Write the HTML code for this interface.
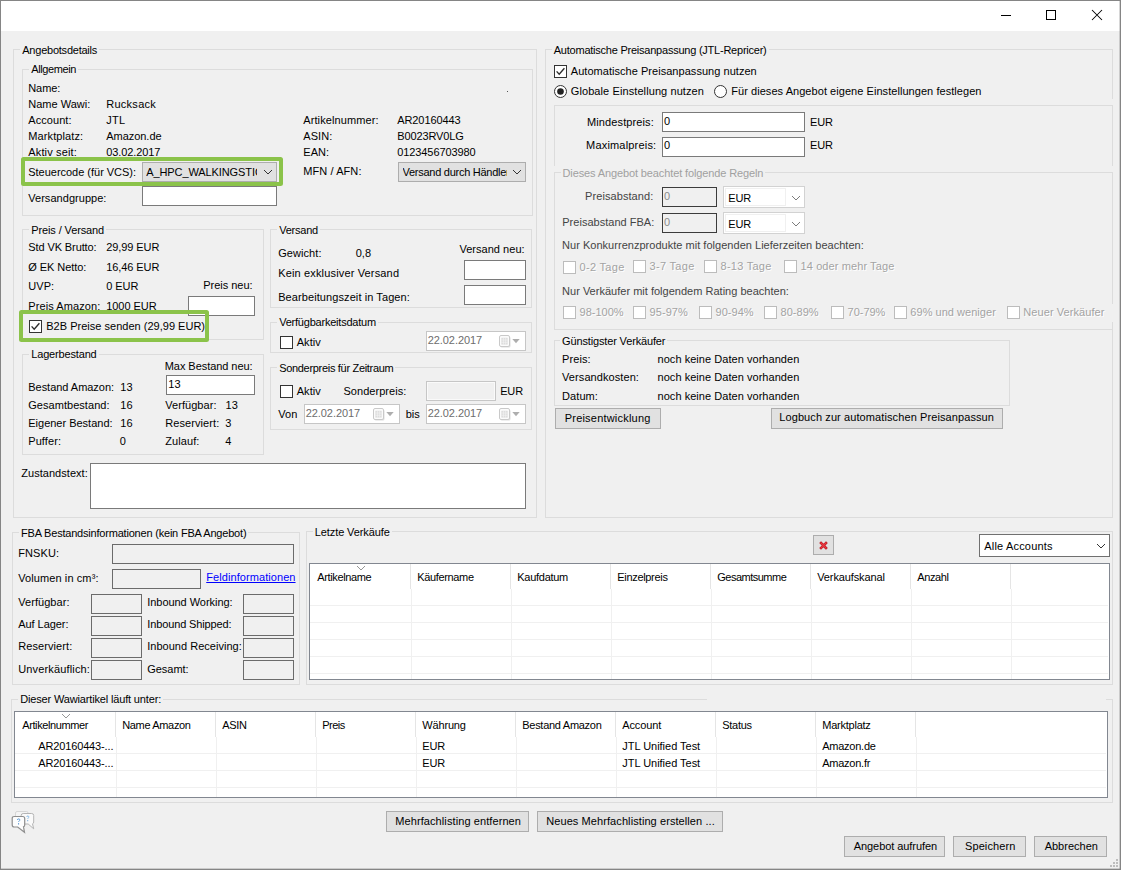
<!DOCTYPE html>
<html lang="de"><head><meta charset="utf-8"><title>Angebot</title>
<style>
*{box-sizing:border-box;margin:0;padding:0}
html,body{width:1121px;height:870px;overflow:hidden;background:#f0f0f0}
body{position:relative;font-family:"Liberation Sans", sans-serif;font-size:11px;line-height:13px;color:#000}
.b{position:absolute;display:block}
.t{position:absolute;white-space:pre;height:13px;line-height:13px}
.dis{color:#a3a3a3;text-shadow:1px 1px 0 #fff}
.lnk{text-decoration:underline}
</style></head>
<body>
<div class="b" style="left:0px;top:0px;width:1121px;height:870px;background:#f0f0f0;"></div>
<div class="b" style="left:0px;top:0px;width:1121px;height:31px;background:#fff;"></div>
<div class="b" style="left:1001px;top:15px;width:10px;height:1px;background:#000;"></div>
<div class="b" style="left:1046px;top:10px;width:10px;height:10px;border:1px solid #000;"></div>
<svg class="b" style="left:1091px;top:9px" width="12" height="12" viewBox="0 0 12 12"><path d="M1 1 L11 11 M11 1 L1 11" stroke="#000" stroke-width="1.05" fill="none"/></svg>
<div class="b" style="left:13px;top:49px;width:524px;height:469px;border:1px solid #dcdcdc;"></div>
<span class="t" style="top:44px;left:22.25px;letter-spacing:-0.232px;background:#f0f0f0;padding:0 2px;margin-left:-2px;">Angebotsdetails</span>
<div class="b" style="left:22px;top:69px;width:511px;height:147px;border:1px solid #dcdcdc;"></div>
<span class="t" style="top:63px;left:31.25px;letter-spacing:-0.39px;background:#f0f0f0;padding:0 2px;margin-left:-2px;">Allgemein</span>
<span class="t" style="top:82px;left:28.25px;letter-spacing:-0.081px;">Name:</span>
<span class="t" style="top:98px;left:28.25px;letter-spacing:0.006px;">Name Wawi:</span>
<span class="t" style="top:98px;left:106.25px;letter-spacing:0.264px;">Rucksack</span>
<span class="t" style="top:114px;left:28.25px;letter-spacing:0.061px;">Account:</span>
<span class="t" style="top:114px;left:106.25px;letter-spacing:0.219px;">JTL</span>
<span class="t" style="top:130px;left:28.25px;letter-spacing:0.109px;">Marktplatz:</span>
<span class="t" style="top:130px;left:106.25px;letter-spacing:-0.04px;">Amazon.de</span>
<span class="t" style="top:146px;left:28.25px;letter-spacing:0.157px;">Aktiv seit:</span>
<span class="t" style="top:146px;left:106.25px;letter-spacing:-0.106px;">03.02.2017</span>
<span class="t" style="top:166px;left:28.25px;letter-spacing:-0.02px;">Steuercode (für VCS):</span>
<span class="t" style="top:192px;left:28.25px;letter-spacing:0.038px;">Versandgruppe:</span>
<span class="t" style="top:114px;left:303.25px;letter-spacing:0.095px;">Artikelnummer:</span>
<span class="t" style="top:114px;left:397.25px;letter-spacing:-0.093px;">AR20160443</span>
<span class="t" style="top:130px;left:303.25px;letter-spacing:0.08px;">ASIN:</span>
<span class="t" style="top:130px;left:397.25px;letter-spacing:-0.114px;">B0023RV0LG</span>
<span class="t" style="top:146px;left:303.25px;letter-spacing:0.08px;">EAN:</span>
<span class="t" style="top:146px;left:397.25px;letter-spacing:-0.095px;">0123456703980</span>
<span class="t" style="top:165px;left:303.25px;letter-spacing:0.085px;">MFN / AFN:</span>
<div class="b" style="left:507px;top:91px;width:1px;height:1px;background:#555;"></div>
<div class="b" style="left:142px;top:162px;width:135px;height:20px;background:#e1e1e1;border:1px solid #adadad;"></div>
<span class="t" style="top:166px;left:146.25px;letter-spacing:-0.1px;width:110.5px;overflow:hidden;">A_HPC_WALKINGSTICK</span>
<svg class="b" style="left:263px;top:168.6px" width="10" height="6" viewBox="-1 -1 10 6"><path d="M0 0 L4.0 4 L8 0" fill="none" stroke="#333" stroke-width="1"/></svg>
<div class="b" style="left:398px;top:162px;width:128px;height:20px;background:#e1e1e1;border:1px solid #adadad;"></div>
<span class="t" style="top:166px;left:402.55px;letter-spacing:-0.27px;width:104px;overflow:hidden;">Versand durch Händler</span>
<svg class="b" style="left:512px;top:168.6px" width="10" height="6" viewBox="-1 -1 10 6"><path d="M0 0 L4.0 4 L8 0" fill="none" stroke="#333" stroke-width="1"/></svg>
<div class="b" style="left:142px;top:186px;width:135px;height:20px;background:#fff;border:1px solid #7a7a7a;"></div>
<div class="b" style="left:22px;top:229px;width:242px;height:111px;border:1px solid #dcdcdc;"></div>
<span class="t" style="top:224px;left:31.25px;letter-spacing:-0.12px;background:#f0f0f0;padding:0 2px;margin-left:-2px;">Preis / Versand</span>
<span class="t" style="top:241px;left:28.25px;letter-spacing:-0.1px;">Std VK Brutto:</span>
<span class="t" style="top:241px;left:106.25px;letter-spacing:-0.085px;">29,99 EUR</span>
<span class="t" style="top:261px;left:28.25px;letter-spacing:-0.059px;">Ø EK Netto:</span>
<span class="t" style="top:261px;left:106.25px;letter-spacing:-0.085px;">16,46 EUR</span>
<span class="t" style="top:280px;left:28.25px;letter-spacing:0.08px;">UVP:</span>
<span class="t" style="top:280px;left:106.25px;letter-spacing:-0.061px;">0 EUR</span>
<span class="t" style="top:300px;left:28.25px;letter-spacing:0.087px;">Preis Amazon:</span>
<span class="t" style="top:300px;left:106.25px;letter-spacing:-0.058px;">1000 EUR</span>
<span class="t" style="top:279px;left:203.25px;letter-spacing:-0.023px;">Preis neu:</span>
<div class="b" style="left:20px;top:310px;width:188px;height:31px;background:#f0f0f0;"></div>
<div class="b" style="left:188px;top:296px;width:67px;height:20px;background:#fff;border:1px solid #7a7a7a;"></div>
<div class="b" style="left:29px;top:320px;width:13px;height:13px;background:#fff;border:1px solid #333;"></div>
<svg class="b" style="left:29px;top:320px" width="13" height="13" viewBox="0 0 13 13"><path d="M2.6 6.4 L5.2 9.2 L10.4 3.2" fill="none" stroke="#2b2b2b" stroke-width="1.350"/></svg>
<span class="t" style="top:320px;left:46.25px;letter-spacing:0.015px;">B2B Preise senden (29,99 EUR)</span>
<div class="b" style="left:22px;top:354px;width:242px;height:101px;border:1px solid #dcdcdc;"></div>
<span class="t" style="top:348px;left:31.25px;letter-spacing:-0.165px;background:#f0f0f0;padding:0 2px;margin-left:-2px;">Lagerbestand</span>
<span class="t" style="top:360px;left:164.75px;letter-spacing:-0.054px;">Max Bestand neu:</span>
<div class="b" style="left:166px;top:375px;width:89px;height:20px;background:#fff;border:1px solid #7a7a7a;"></div>
<span class="t" style="top:378px;left:168.25px;letter-spacing:0.08px;">13</span>
<span class="t" style="top:381px;left:28.25px;letter-spacing:-0.029px;">Bestand Amazon:</span>
<span class="t" style="top:381px;left:120.25px;letter-spacing:0.08px;">13</span>
<span class="t" style="top:399px;left:28.25px;letter-spacing:0.042px;">Gesamtbestand:</span>
<span class="t" style="top:399px;left:120.25px;letter-spacing:0.08px;">16</span>
<span class="t" style="top:417px;left:28.25px;letter-spacing:-0.006px;">Eigener Bestand:</span>
<span class="t" style="top:417px;left:120.25px;letter-spacing:0.08px;">16</span>
<span class="t" style="top:435px;left:28.25px;letter-spacing:0.08px;">Puffer:</span>
<span class="t" style="top:435px;left:119.75px;letter-spacing:0.08px;">0</span>
<span class="t" style="top:399px;left:165.25px;letter-spacing:0.053px;">Verfügbar:</span>
<span class="t" style="top:399px;left:225.5px;letter-spacing:0.08px;">13</span>
<span class="t" style="top:417px;left:165.25px;letter-spacing:0.08px;">Reserviert:</span>
<span class="t" style="top:417px;left:225.25px;letter-spacing:0.08px;">3</span>
<span class="t" style="top:435px;left:165.25px;letter-spacing:0.08px;">Zulauf:</span>
<span class="t" style="top:435px;left:225.25px;letter-spacing:0.08px;">4</span>
<span class="t" style="top:467px;left:21.25px;letter-spacing:0.039px;">Zustandstext:</span>
<div class="b" style="left:90px;top:463px;width:436px;height:46px;background:#fff;border:1px solid #7a7a7a;"></div>
<div class="b" style="left:270px;top:229px;width:262px;height:79px;border:1px solid #dcdcdc;"></div>
<span class="t" style="top:224px;left:279.15px;letter-spacing:-0.225px;background:#f0f0f0;padding:0 2px;margin-left:-2px;">Versand</span>
<span class="t" style="top:247px;left:278.15px;letter-spacing:0.08px;">Gewicht:</span>
<span class="t" style="top:247px;left:355.65px;letter-spacing:0.08px;">0,8</span>
<span class="t" style="top:243px;left:459.4px;letter-spacing:0.038px;">Versand neu:</span>
<span class="t" style="top:267px;left:278.15px;letter-spacing:0.158px;">Kein exklusiver Versand</span>
<div class="b" style="left:464px;top:260px;width:62px;height:20px;background:#fff;border:1px solid #7a7a7a;"></div>
<span class="t" style="top:291px;left:278.15px;letter-spacing:0.09px;">Bearbeitungszeit in Tagen:</span>
<div class="b" style="left:464px;top:285px;width:62px;height:20px;background:#fff;border:1px solid #7a7a7a;"></div>
<div class="b" style="left:270px;top:322px;width:262px;height:31px;border:1px solid #dcdcdc;"></div>
<span class="t" style="top:316px;left:279.15px;letter-spacing:-0.215px;background:#f0f0f0;padding:0 2px;margin-left:-2px;">Verfügbarkeitsdatum</span>
<div class="b" style="left:280px;top:336px;width:13px;height:13px;background:#fff;border:1px solid #333;"></div>
<span class="t" style="top:336px;left:296.65px;letter-spacing:0.08px;">Aktiv</span>
<div class="b" style="left:426px;top:331px;width:100px;height:20px;background:#fff;border:1px solid #c6c6c6;"></div>
<span class="t" style="top:334px;left:427.65px;letter-spacing:-0.056px;color:#6d6d6d;">22.02.2017</span>
<svg class="b" style="left:499px;top:335px" width="12" height="13" viewBox="0 0 12 13">
<rect x="1.5" y="1.5" width="10" height="11" rx="1.5" fill="#dedede" stroke="none"/>
<rect x="0.5" y="0.5" width="10" height="11" rx="1.5" fill="#fbfbfb" stroke="#c9c9c9"/>
<rect x="2.3" y="2.800" width="6.400" height="6.800" fill="#dddddd"/>
<path d="M4.500 2.800v6.800M6.600 2.800v6.800M2.300 5h6.400M2.300 7.300h6.400" stroke="#f4f4f4" stroke-width="0.6"/></svg>
<svg class="b" style="left:512px;top:339px" width="8" height="5" viewBox="0 0 8 5"><path d="M0.3 0 H7.7 L4 4.3 Z" fill="#aeaeae"/></svg>
<div class="b" style="left:270px;top:367px;width:262px;height:63px;border:1px solid #dcdcdc;"></div>
<span class="t" style="top:362px;left:279.15px;letter-spacing:-0.307px;background:#f0f0f0;padding:0 2px;margin-left:-2px;">Sonderpreis für Zeitraum</span>
<div class="b" style="left:280px;top:385px;width:13px;height:13px;background:#fff;border:1px solid #333;"></div>
<span class="t" style="top:385px;left:296.65px;letter-spacing:0.08px;">Aktiv</span>
<span class="t" style="top:385px;left:343.4px;letter-spacing:0.056px;">Sonderpreis:</span>
<div class="b" style="left:426px;top:381px;width:70px;height:20px;background:#f0f0f0;border:1px solid #c6c6c6;box-shadow:inset 0 0 0 1px #fafafa;"></div>
<span class="t" style="top:385px;left:500.15px;letter-spacing:-0.145px;">EUR</span>
<span class="t" style="top:408px;left:278.15px;letter-spacing:0.08px;">Von</span>
<div class="b" style="left:304px;top:404px;width:96px;height:20px;background:#fff;border:1px solid #c6c6c6;"></div>
<span class="t" style="top:407px;left:305.65px;letter-spacing:-0.056px;color:#6d6d6d;">22.02.2017</span>
<svg class="b" style="left:373px;top:408px" width="12" height="13" viewBox="0 0 12 13">
<rect x="1.5" y="1.5" width="10" height="11" rx="1.5" fill="#dedede" stroke="none"/>
<rect x="0.5" y="0.5" width="10" height="11" rx="1.5" fill="#fbfbfb" stroke="#c9c9c9"/>
<rect x="2.3" y="2.800" width="6.400" height="6.800" fill="#dddddd"/>
<path d="M4.500 2.800v6.800M6.600 2.800v6.800M2.300 5h6.400M2.300 7.300h6.400" stroke="#f4f4f4" stroke-width="0.6"/></svg>
<svg class="b" style="left:386px;top:412px" width="8" height="5" viewBox="0 0 8 5"><path d="M0.3 0 H7.7 L4 4.3 Z" fill="#aeaeae"/></svg>
<span class="t" style="top:408px;left:405.65px;letter-spacing:0.08px;">bis</span>
<div class="b" style="left:426px;top:404px;width:100px;height:20px;background:#fff;border:1px solid #c6c6c6;"></div>
<span class="t" style="top:407px;left:427.65px;letter-spacing:-0.056px;color:#6d6d6d;">22.02.2017</span>
<svg class="b" style="left:499px;top:408px" width="12" height="13" viewBox="0 0 12 13">
<rect x="1.5" y="1.5" width="10" height="11" rx="1.5" fill="#dedede" stroke="none"/>
<rect x="0.5" y="0.5" width="10" height="11" rx="1.5" fill="#fbfbfb" stroke="#c9c9c9"/>
<rect x="2.3" y="2.800" width="6.400" height="6.800" fill="#dddddd"/>
<path d="M4.500 2.800v6.800M6.600 2.800v6.800M2.300 5h6.400M2.300 7.300h6.400" stroke="#f4f4f4" stroke-width="0.6"/></svg>
<svg class="b" style="left:512px;top:412px" width="8" height="5" viewBox="0 0 8 5"><path d="M0.3 0 H7.7 L4 4.3 Z" fill="#aeaeae"/></svg>
<div class="b" style="left:21px;top:157px;width:262px;height:29px;border:4px solid #8bc34a;z-index:5;border-radius:2.500px;"></div>
<div class="b" style="left:19px;top:310px;width:190px;height:32px;border:4px solid #8bc34a;z-index:5;border-radius:2.500px;"></div>
<div class="b" style="left:545px;top:49px;width:568px;height:469px;border:1px solid #dcdcdc;"></div>
<span class="t" style="top:44px;left:553.75px;letter-spacing:-0.232px;background:#f0f0f0;padding:0 2px;margin-left:-2px;">Automatische Preisanpassung (JTL-Repricer)</span>
<div class="b" style="left:1110px;top:99px;width:4px;height:6px;background:#f0f0f0;"></div>
<div class="b" style="left:1110px;top:166px;width:4px;height:6px;background:#f0f0f0;"></div>
<div class="b" style="left:554px;top:65px;width:13px;height:13px;background:#fff;border:1px solid #333;"></div>
<svg class="b" style="left:554px;top:65px" width="13" height="13" viewBox="0 0 13 13"><path d="M2.6 6.4 L5.2 9.2 L10.4 3.2" fill="none" stroke="#2b2b2b" stroke-width="1.350"/></svg>
<span class="t" style="top:65px;left:570.75px;letter-spacing:0.039px;">Automatische Preisanpassung nutzen</span>
<svg class="b" style="left:554px;top:84.6px" width="13" height="13" viewBox="0 0 13 13"><circle cx="6.5" cy="6.5" r="6" fill="#fff" stroke="#333" stroke-width="1"/><circle cx="6.5" cy="6.5" r="3.3" fill="#222"/></svg>
<span class="t" style="top:85px;left:570.75px;letter-spacing:0.093px;">Globale Einstellung nutzen</span>
<svg class="b" style="left:714.3px;top:84.6px" width="13" height="13" viewBox="0 0 13 13"><circle cx="6.5" cy="6.5" r="6" fill="#fff" stroke="#333" stroke-width="1"/></svg>
<span class="t" style="top:85px;left:731.25px;letter-spacing:0.053px;">Für dieses Angebot eigene Einstellungen festlegen</span>
<div class="b" style="left:554px;top:105px;width:559px;height:1px;background:#dcdcdc;"></div>
<div class="b" style="left:554px;top:105px;width:1px;height:61px;background:#dcdcdc;"></div>
<div class="b" style="left:1112px;top:105px;width:1px;height:61px;background:#dcdcdc;"></div>
<span class="t" style="top:116px;left:587.05px;letter-spacing:0.106px;">Mindestpreis:</span>
<div class="b" style="left:662px;top:112px;width:143px;height:20px;background:#fff;border:1px solid #7a7a7a;"></div>
<span class="t" style="top:115px;left:664.05px;letter-spacing:0.08px;">0</span>
<span class="t" style="top:116px;left:810.05px;letter-spacing:-0.145px;">EUR</span>
<span class="t" style="top:139px;left:586.05px;letter-spacing:0.188px;">Maximalpreis:</span>
<div class="b" style="left:662px;top:137px;width:143px;height:20px;background:#fff;border:1px solid #7a7a7a;"></div>
<span class="t" style="top:139px;left:664.05px;letter-spacing:0.08px;">0</span>
<span class="t" style="top:139px;left:810.05px;letter-spacing:-0.145px;">EUR</span>
<div class="b" style="left:554px;top:172px;width:559px;height:158px;border:1px solid #dcdcdc;"></div>
<span class="t" style="top:167px;left:562.55px;letter-spacing:-0.121px;color:#a0a0a0;background:#f0f0f0;padding:0 2px;margin-left:-2px;">Dieses Angebot beachtet folgende Regeln</span>
<span class="t" style="top:190px;left:585.05px;letter-spacing:0.08px;color:#444;">Preisabstand:</span>
<div class="b" style="left:662px;top:187px;width:55px;height:20px;background:#f0f0f0;border:1px solid #3c3c3c;"></div>
<span class="t" style="top:190px;left:664.05px;letter-spacing:0.08px;color:#8a8a8a;">0</span>
<span class="t" style="top:216px;left:562.25px;letter-spacing:0.019px;color:#444;">Preisabstand FBA:</span>
<div class="b" style="left:662px;top:213px;width:55px;height:20px;background:#f0f0f0;border:1px solid #3c3c3c;"></div>
<span class="t" style="top:216px;left:664.05px;letter-spacing:0.08px;color:#8a8a8a;">0</span>
<div class="b" style="left:723px;top:186px;width:82px;height:22px;background:#fff;border:1px solid #d2d2d2;"></div>
<div class="b" style="left:725px;top:188px;width:61px;height:18px;border:1px solid #f0f0f0;"></div>
<span class="t" style="top:192px;left:728.25px;letter-spacing:-0.145px;">EUR</span>
<svg class="b" style="left:791px;top:195px" width="10" height="6" viewBox="-1 -1 10 6"><path d="M0 0 L4.0 4 L8 0" fill="none" stroke="#7c7c7c" stroke-width="1"/></svg>
<div class="b" style="left:723px;top:212px;width:82px;height:22px;background:#fff;border:1px solid #d2d2d2;"></div>
<div class="b" style="left:725px;top:214px;width:61px;height:18px;border:1px solid #f0f0f0;"></div>
<span class="t" style="top:218px;left:728.25px;letter-spacing:-0.145px;">EUR</span>
<svg class="b" style="left:791px;top:221px" width="10" height="6" viewBox="-1 -1 10 6"><path d="M0 0 L4.0 4 L8 0" fill="none" stroke="#7c7c7c" stroke-width="1"/></svg>
<span class="t" style="top:239px;left:562.05px;letter-spacing:0.026px;color:#444;">Nur Konkurrenzprodukte mit folgenden Lieferzeiten beachten:</span>
<div class="b" style="left:563px;top:261px;width:13px;height:13px;background:#fff;border:1px solid #bcbcbc;"></div>
<span class="t dis" style="top:261px;left:579.55px;letter-spacing:0.305px;">0-2 Tage</span>
<div class="b" style="left:633px;top:260px;width:13px;height:13px;background:#fff;border:1px solid #bcbcbc;"></div>
<span class="t dis" style="top:260px;left:649.55px;letter-spacing:0.305px;">3-7 Tage</span>
<div class="b" style="left:704px;top:260px;width:13px;height:13px;background:#fff;border:1px solid #bcbcbc;"></div>
<span class="t dis" style="top:260px;left:720.55px;letter-spacing:0.257px;">8-13 Tage</span>
<div class="b" style="left:784px;top:260px;width:13px;height:13px;background:#fff;border:1px solid #bcbcbc;"></div>
<span class="t dis" style="top:260px;left:800.55px;letter-spacing:0.098px;">14 oder mehr Tage</span>
<span class="t" style="top:285px;left:562.05px;letter-spacing:0.013px;color:#444;">Nur Verkäufer mit folgendem Rating beachten:</span>
<div class="b" style="left:1005px;top:304px;width:110px;height:18px;background:#f0f0f0;"></div>
<div class="b" style="left:563px;top:306px;width:13px;height:13px;background:#fff;border:1px solid #bcbcbc;"></div>
<span class="t dis" style="top:306px;left:579.55px;">98-100%</span>
<div class="b" style="left:633px;top:306px;width:13px;height:13px;background:#fff;border:1px solid #bcbcbc;"></div>
<span class="t dis" style="top:306px;left:649.55px;letter-spacing:0.063px;">95-97%</span>
<div class="b" style="left:699px;top:306px;width:13px;height:13px;background:#fff;border:1px solid #bcbcbc;"></div>
<span class="t dis" style="top:306px;left:715.55px;letter-spacing:0.021px;">90-94%</span>
<div class="b" style="left:764px;top:306px;width:13px;height:13px;background:#fff;border:1px solid #bcbcbc;"></div>
<span class="t dis" style="top:306px;left:780.55px;letter-spacing:0.021px;">80-89%</span>
<div class="b" style="left:831px;top:306px;width:13px;height:13px;background:#fff;border:1px solid #bcbcbc;"></div>
<span class="t dis" style="top:306px;left:847.55px;letter-spacing:-0.02px;">70-79%</span>
<div class="b" style="left:893.8px;top:306px;width:13px;height:13px;background:#fff;border:1px solid #bcbcbc;"></div>
<span class="t dis" style="top:306px;left:910.35px;letter-spacing:0.032px;">69% und weniger</span>
<div class="b" style="left:1006.8px;top:306px;width:13px;height:13px;background:#fff;border:1px solid #bcbcbc;"></div>
<span class="t dis" style="top:306px;left:1023.35px;letter-spacing:0.066px;">Neuer Verkäufer</span>
<div class="b" style="left:554px;top:340px;width:456px;height:66px;border:1px solid #dcdcdc;"></div>
<span class="t" style="top:335px;left:562.05px;letter-spacing:-0.147px;background:#f0f0f0;padding:0 2px;margin-left:-2px;">Günstigster Verkäufer</span>
<span class="t" style="top:353px;left:562.05px;letter-spacing:0.08px;background:#f0f0f0;padding:0 2px;margin-left:-2px;">Preis:</span>
<span class="t" style="top:353px;left:657.55px;letter-spacing:0.043px;background:#f0f0f0;padding:0 2px;margin-left:-2px;">noch keine Daten vorhanden</span>
<span class="t" style="top:371px;left:562.05px;letter-spacing:0.08px;background:#f0f0f0;padding:0 2px;margin-left:-2px;">Versandkosten:</span>
<span class="t" style="top:371px;left:657.55px;letter-spacing:0.043px;background:#f0f0f0;padding:0 2px;margin-left:-2px;">noch keine Daten vorhanden</span>
<span class="t" style="top:390px;left:562.05px;letter-spacing:0.08px;background:#f0f0f0;padding:0 2px;margin-left:-2px;">Datum:</span>
<span class="t" style="top:390px;left:657.55px;letter-spacing:0.043px;background:#f0f0f0;padding:0 2px;margin-left:-2px;">noch keine Daten vorhanden</span>
<div class="b" style="left:555px;top:408px;width:106px;height:21px;background:#e1e1e1;border:1px solid #adadad;"></div>
<span class="t" style="top:412px;left:564.75px;letter-spacing:0.203px;">Preisentwicklung</span>
<div class="b" style="left:771px;top:408px;width:232px;height:21px;background:#e1e1e1;border:1px solid #adadad;"></div>
<span class="t" style="top:411px;left:779.25px;letter-spacing:0.098px;">Logbuch zur automatischen Preisanpassun</span>
<div class="b" style="left:12px;top:532px;width:288px;height:153px;border:1px solid #dcdcdc;"></div>
<span class="t" style="top:527px;left:21.05px;letter-spacing:-0.202px;background:#f0f0f0;padding:0 2px;margin-left:-2px;">FBA Bestandsinformationen (kein FBA Angebot)</span>
<span class="t" style="top:547px;left:18.25px;letter-spacing:0.08px;">FNSKU:</span>
<div class="b" style="left:112px;top:544px;width:182px;height:20px;background:#f0f0f0;border:1px solid #6b6b6b;"></div>
<span class="t" style="top:572px;left:18.25px;letter-spacing:0.095px;">Volumen in cm³:</span>
<div class="b" style="left:112px;top:569px;width:89px;height:20px;background:#f0f0f0;border:1px solid #6b6b6b;"></div>
<span class="t lnk" style="top:571px;left:206.25px;letter-spacing:0.073px;color:#0000ff;">Feldinformationen</span>
<span class="t" style="top:596px;left:18.25px;letter-spacing:0.053px;">Verfügbar:</span>
<div class="b" style="left:91px;top:594px;width:51px;height:20px;background:#f0f0f0;border:1px solid #6b6b6b;"></div>
<span class="t" style="top:596px;left:147.25px;letter-spacing:-0.046px;">Inbound Working:</span>
<div class="b" style="left:243px;top:594px;width:51px;height:20px;background:#f0f0f0;border:1px solid #6b6b6b;"></div>
<span class="t" style="top:618px;left:18.25px;letter-spacing:-0.057px;">Auf Lager:</span>
<div class="b" style="left:91px;top:616px;width:51px;height:20px;background:#f0f0f0;border:1px solid #6b6b6b;"></div>
<span class="t" style="top:618px;left:147.25px;letter-spacing:-0.128px;">Inbound Shipped:</span>
<div class="b" style="left:243px;top:616px;width:51px;height:20px;background:#f0f0f0;border:1px solid #6b6b6b;"></div>
<span class="t" style="top:640px;left:18.25px;letter-spacing:0.08px;">Reserviert:</span>
<div class="b" style="left:91px;top:638px;width:51px;height:20px;background:#f0f0f0;border:1px solid #6b6b6b;"></div>
<span class="t" style="top:640px;left:147.25px;letter-spacing:0.017px;">Inbound Receiving:</span>
<div class="b" style="left:243px;top:638px;width:51px;height:20px;background:#f0f0f0;border:1px solid #6b6b6b;"></div>
<span class="t" style="top:663px;left:18.25px;letter-spacing:0.15px;">Unverkäuflich:</span>
<div class="b" style="left:91px;top:660px;width:51px;height:20px;background:#f0f0f0;border:1px solid #6b6b6b;"></div>
<span class="t" style="top:663px;left:147.25px;letter-spacing:-0.025px;">Gesamt:</span>
<div class="b" style="left:243px;top:660px;width:51px;height:20px;background:#f0f0f0;border:1px solid #6b6b6b;"></div>
<div class="b" style="left:306px;top:531px;width:807px;height:154px;border:1px solid #dcdcdc;"></div>
<span class="t" style="top:526px;left:314.85px;letter-spacing:-0.11px;background:#f0f0f0;padding:0 2px;margin-left:-2px;">Letzte Verkäufe</span>
<div class="b" style="left:813px;top:535px;width:21px;height:20px;background:#e1e1e1;border:1px solid #adadad;"></div>
<svg class="b" style="left:819px;top:541px" width="9" height="9" viewBox="0 0 9 9"><path d="M2 2 L7 7 M7 2 L2 7" stroke="#b5121b" stroke-width="2.500" stroke-linecap="square" fill="none"/><path d="M2 2 L7 7 M7 2 L2 7" stroke="#ea3941" stroke-width="1.300" stroke-linecap="square" fill="none"/></svg>
<div class="b" style="left:979px;top:534px;width:131px;height:23px;background:#fff;border:1px solid #707070;"></div>
<span class="t" style="top:540px;left:984.25px;letter-spacing:0.181px;">Alle Accounts</span>
<svg class="b" style="left:1096px;top:543px" width="10" height="6" viewBox="-1 -1 10 6"><path d="M0 0 L4.0 4 L8 0" fill="none" stroke="#333" stroke-width="1"/></svg>
<div class="b" style="left:309px;top:563px;width:801px;height:117px;background:#fff;border:1px solid #828790;"></div>
<div class="b" style="left:410px;top:564px;width:1px;height:25px;background:#e5e5e5;"></div>
<div class="b" style="left:411px;top:589px;width:1px;height:90px;background:#f0f0f0;"></div>
<div class="b" style="left:510px;top:564px;width:1px;height:25px;background:#e5e5e5;"></div>
<div class="b" style="left:511px;top:589px;width:1px;height:90px;background:#f0f0f0;"></div>
<div class="b" style="left:610px;top:564px;width:1px;height:25px;background:#e5e5e5;"></div>
<div class="b" style="left:611px;top:589px;width:1px;height:90px;background:#f0f0f0;"></div>
<div class="b" style="left:710px;top:564px;width:1px;height:25px;background:#e5e5e5;"></div>
<div class="b" style="left:711px;top:589px;width:1px;height:90px;background:#f0f0f0;"></div>
<div class="b" style="left:810px;top:564px;width:1px;height:25px;background:#e5e5e5;"></div>
<div class="b" style="left:811px;top:589px;width:1px;height:90px;background:#f0f0f0;"></div>
<div class="b" style="left:910px;top:564px;width:1px;height:25px;background:#e5e5e5;"></div>
<div class="b" style="left:911px;top:589px;width:1px;height:90px;background:#f0f0f0;"></div>
<div class="b" style="left:1010px;top:564px;width:1px;height:25px;background:#e5e5e5;"></div>
<div class="b" style="left:1011px;top:589px;width:1px;height:90px;background:#f0f0f0;"></div>
<div class="b" style="left:310px;top:605px;width:798px;height:1px;background:#f0f0f0;"></div>
<div class="b" style="left:310px;top:622px;width:798px;height:1px;background:#f0f0f0;"></div>
<div class="b" style="left:310px;top:639px;width:798px;height:1px;background:#f0f0f0;"></div>
<div class="b" style="left:310px;top:656px;width:798px;height:1px;background:#f0f0f0;"></div>
<div class="b" style="left:310px;top:673px;width:798px;height:1px;background:#f0f0f0;"></div>
<span class="t" style="top:571px;left:317.25px;letter-spacing:-0.366px;">Artikelname</span>
<span class="t" style="top:571px;left:417.25px;letter-spacing:-0.349px;">Käufername</span>
<span class="t" style="top:571px;left:517.25px;letter-spacing:-0.273px;">Kaufdatum</span>
<span class="t" style="top:571px;left:617.25px;letter-spacing:-0.315px;">Einzelpreis</span>
<span class="t" style="top:571px;left:717.25px;letter-spacing:-0.503px;">Gesamtsumme</span>
<span class="t" style="top:571px;left:817.25px;letter-spacing:-0.12px;">Verkaufskanal</span>
<span class="t" style="top:571px;left:917.25px;letter-spacing:-0.365px;">Anzahl</span>
<svg class="b" style="left:356.0px;top:565.3px" width="10" height="6" viewBox="-1 -1 10 6"><path d="M0 0 L4.0 4 L8 0" fill="none" stroke="#8a8a8a" stroke-width="0.9"/></svg>
<div class="b" style="left:11px;top:699px;width:1102px;height:104px;border:1px solid #dcdcdc;"></div>
<div class="b" style="left:707px;top:698px;width:399px;height:3px;background:#f0f0f0;"></div>
<span class="t" style="top:693px;left:20.25px;letter-spacing:-0.158px;background:#f0f0f0;padding:0 2px;margin-left:-2px;">Dieser Wawiartikel läuft unter:</span>
<div class="b" style="left:14px;top:711px;width:1094px;height:87px;background:#fff;border:1px solid #828790;"></div>
<div class="b" style="left:115px;top:712px;width:1px;height:25px;background:#e5e5e5;"></div>
<div class="b" style="left:116px;top:737px;width:1px;height:60px;background:#f0f0f0;"></div>
<div class="b" style="left:215px;top:712px;width:1px;height:25px;background:#e5e5e5;"></div>
<div class="b" style="left:216px;top:737px;width:1px;height:60px;background:#f0f0f0;"></div>
<div class="b" style="left:315px;top:712px;width:1px;height:25px;background:#e5e5e5;"></div>
<div class="b" style="left:316px;top:737px;width:1px;height:60px;background:#f0f0f0;"></div>
<div class="b" style="left:415px;top:712px;width:1px;height:25px;background:#e5e5e5;"></div>
<div class="b" style="left:416px;top:737px;width:1px;height:60px;background:#f0f0f0;"></div>
<div class="b" style="left:515px;top:712px;width:1px;height:25px;background:#e5e5e5;"></div>
<div class="b" style="left:516px;top:737px;width:1px;height:60px;background:#f0f0f0;"></div>
<div class="b" style="left:615px;top:712px;width:1px;height:25px;background:#e5e5e5;"></div>
<div class="b" style="left:616px;top:737px;width:1px;height:60px;background:#f0f0f0;"></div>
<div class="b" style="left:715px;top:712px;width:1px;height:25px;background:#e5e5e5;"></div>
<div class="b" style="left:716px;top:737px;width:1px;height:60px;background:#f0f0f0;"></div>
<div class="b" style="left:815px;top:712px;width:1px;height:25px;background:#e5e5e5;"></div>
<div class="b" style="left:816px;top:737px;width:1px;height:60px;background:#f0f0f0;"></div>
<div class="b" style="left:915px;top:712px;width:1px;height:25px;background:#e5e5e5;"></div>
<div class="b" style="left:916px;top:737px;width:1px;height:60px;background:#f0f0f0;"></div>
<div class="b" style="left:15px;top:753px;width:1091px;height:1px;background:#f0f0f0;"></div>
<div class="b" style="left:15px;top:770px;width:1091px;height:1px;background:#f0f0f0;"></div>
<div class="b" style="left:15px;top:787px;width:1091px;height:1px;background:#f0f0f0;"></div>
<span class="t" style="top:719px;left:22.25px;letter-spacing:-0.397px;">Artikelnummer</span>
<span class="t" style="top:719px;left:122.25px;letter-spacing:-0.346px;">Name Amazon</span>
<span class="t" style="top:719px;left:222.25px;letter-spacing:-0.334px;">ASIN</span>
<span class="t" style="top:719px;left:322.25px;letter-spacing:-0.502px;">Preis</span>
<span class="t" style="top:719px;left:422.25px;letter-spacing:-0.156px;">Währung</span>
<span class="t" style="top:719px;left:522.25px;letter-spacing:-0.28px;">Bestand Amazon</span>
<span class="t" style="top:719px;left:622.25px;letter-spacing:-0.114px;">Account</span>
<span class="t" style="top:719px;left:722.25px;letter-spacing:-0.29px;">Status</span>
<span class="t" style="top:719px;left:822.25px;letter-spacing:-0.24px;">Marktplatz</span>
<svg class="b" style="left:61.0px;top:713.3px" width="10" height="6" viewBox="-1 -1 10 6"><path d="M0 0 L4.0 4 L8 0" fill="none" stroke="#8a8a8a" stroke-width="0.9"/></svg>
<span class="t" style="top:740px;left:38.25px;letter-spacing:-0.14px;">AR20160443-...</span>
<span class="t" style="top:740px;left:422.25px;letter-spacing:-0.145px;">EUR</span>
<span class="t" style="top:740px;left:622.25px;letter-spacing:-0.023px;">JTL Unified Test</span>
<span class="t" style="top:740px;left:822.25px;letter-spacing:-0.251px;">Amazon.de</span>
<span class="t" style="top:757px;left:38.25px;letter-spacing:-0.14px;">AR20160443-...</span>
<span class="t" style="top:757px;left:422.25px;letter-spacing:-0.145px;">EUR</span>
<span class="t" style="top:757px;left:622.25px;letter-spacing:-0.023px;">JTL Unified Test</span>
<span class="t" style="top:757px;left:822.25px;letter-spacing:-0.249px;">Amazon.fr</span>
<svg class="b" style="left:10px;top:809px" width="26" height="26" viewBox="0 0 26 26">
<path d="M7 2.5h9.5q1.5 0 1.5 1.5v5.5h-12.5v-5.5q0-1.500 1.500-1.500z" fill="#f4f4f4" stroke="#cfcfcf" stroke-width="0.8"/>
<path d="M13.200 4.500h8.500q2 0 2 2v6.500q0 1.500-1.200 1.800l1.200 5-5.500-4.800h-5q-2 0-2-2v-6.500q0-2 2-2z" fill="#fafafa" stroke="#b4b4b4" stroke-width="1"/>
<path d="M4.200 7.500h8.500q2 0 2 2v6.500q0 1.500-1.200 1.800l1 5.500-6.800-5.300h-3.500q-2 0-2-2v-6.500q0-2 2-2z" fill="#fdfdfd" stroke="#8e8e8e" stroke-width="1.2"/>
<path d="M7.300 11q0.200-1.100 1.300-1.100 1.200 0 1.200 1 0 .7-.6 1.100-.6.400-.6 1" fill="none" stroke="#5b9bd8" stroke-width="1"/><rect x="8" y="14.300" width="1.100" height="1.100" fill="#3b7fc9"/>
<path d="M16.600 8q0.200-1 1.200-1t1.100.9q0 .7-.6 1-.5.400-.5.900" fill="none" stroke="#7db3e3" stroke-width="0.9"/><rect x="17.200" y="11.200" width="1" height="1" fill="#5b9bd8"/>
</svg>
<div class="b" style="left:386px;top:811px;width:143px;height:21px;background:#e1e1e1;border:1px solid #adadad;"></div>
<span class="t" style="top:815px;left:395.25px;letter-spacing:0.091px;">Mehrfachlisting entfernen</span>
<div class="b" style="left:537px;top:811px;width:186px;height:21px;background:#e1e1e1;border:1px solid #adadad;"></div>
<span class="t" style="top:815px;left:546.25px;letter-spacing:0.082px;">Neues Mehrfachlisting erstellen ...</span>
<div class="b" style="left:844px;top:836px;width:101px;height:21px;background:#e1e1e1;border:1px solid #adadad;"></div>
<span class="t" style="top:840px;left:853.75px;letter-spacing:-0.069px;">Angebot aufrufen</span>
<div class="b" style="left:953px;top:836px;width:73px;height:21px;background:#e1e1e1;border:1px solid #adadad;"></div>
<span class="t" style="top:840px;left:965.05px;letter-spacing:0.084px;">Speichern</span>
<div class="b" style="left:1034px;top:836px;width:73px;height:21px;background:#e1e1e1;border:1px solid #adadad;"></div>
<span class="t" style="top:840px;left:1044.65px;letter-spacing:0.009px;">Abbrechen</span>
<div class="b" style="left:1116px;top:859px;width:2px;height:2px;background:#bdbdbd;"></div>
<div class="b" style="left:1113px;top:862px;width:2px;height:2px;background:#bdbdbd;"></div>
<div class="b" style="left:1116px;top:862px;width:2px;height:2px;background:#bdbdbd;"></div>
<div class="b" style="left:1110px;top:865px;width:2px;height:2px;background:#bdbdbd;"></div>
<div class="b" style="left:1113px;top:865px;width:2px;height:2px;background:#bdbdbd;"></div>
<div class="b" style="left:1116px;top:865px;width:2px;height:2px;background:#bdbdbd;"></div>
<div class="b" style="left:1119px;top:1px;width:1px;height:868px;background:rgba(120,120,120,0.30);z-index:9;"></div>
<div class="b" style="left:1px;top:868px;width:1119px;height:1px;background:rgba(120,120,120,0.30);z-index:9;"></div>
<div class="b" style="left:0px;top:0px;width:1121px;height:870px;border:1px solid #858585;z-index:9;"></div>
</body></html>
